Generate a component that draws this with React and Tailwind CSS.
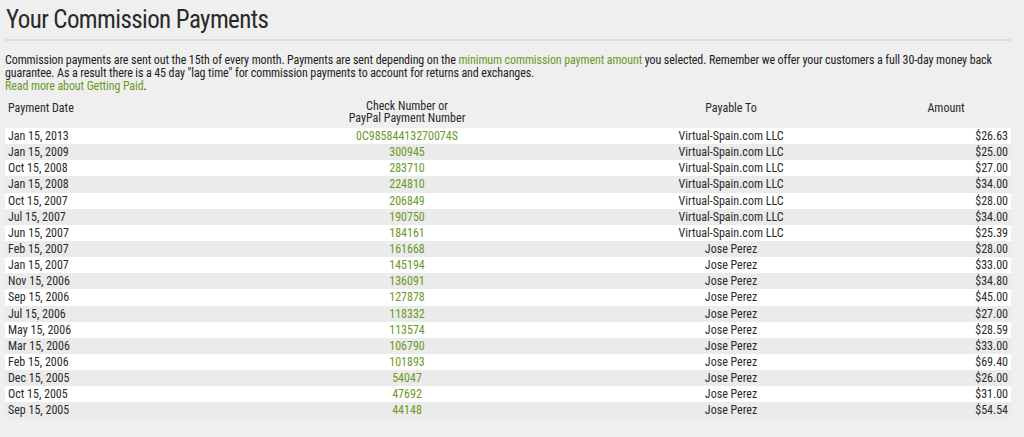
import React from "react";

// Historial de pagos de comisiones
const payments = [
	["Jan 15, 2013", "0C98584413270074S", "Virtual-Spain.com LLC", "$26.63"],
	["Jan 15, 2009", "300945", "Virtual-Spain.com LLC", "$25.00"],
	["Oct 15, 2008", "283710", "Virtual-Spain.com LLC", "$27.00"],
	["Jan 15, 2008", "224810", "Virtual-Spain.com LLC", "$34.00"],
	["Oct 15, 2007", "206849", "Virtual-Spain.com LLC", "$28.00"],
	["Jul 15, 2007", "190750", "Virtual-Spain.com LLC", "$34.00"],
	["Jun 15, 2007", "184161", "Virtual-Spain.com LLC", "$25.39"],
	["Feb 15, 2007", "161668", "Jose Perez", "$28.00"],
	["Jan 15, 2007", "145194", "Jose Perez", "$33.00"],
	["Nov 15, 2006", "136091", "Jose Perez", "$34.80"],
	["Sep 15, 2006", "127878", "Jose Perez", "$45.00"],
	["Jul 15, 2006", "118332", "Jose Perez", "$27.00"],
	["May 15, 2006", "113574", "Jose Perez", "$28.59"],
	["Mar 15, 2006", "106790", "Jose Perez", "$33.00"],
	["Feb 15, 2006", "101893", "Jose Perez", "$69.40"],
	["Dec 15, 2005", "54047", "Jose Perez", "$26.00"],
	["Oct 15, 2005", "47692", "Jose Perez", "$31.00"],
	["Sep 15, 2005", "44148", "Jose Perez", "$54.54"],
];

function App() {
	return (
		<div
			className="min-h-screen bg-[#efefef] text-[#333] px-[5px] pt-[4px]"
			style={{ fontFamily: '"Roboto Condensed", "DejaVu Sans Condensed", Roboto, sans-serif' }}
		>
			<div className="w-[1006px]">
				<h1 className="text-[25px] leading-[32px] tracking-[-0.6px] text-[#2a2a2a] pl-[1px]">
					Your Commission Payments
				</h1>
				<hr className="mt-[3px] border-0 border-t-[2px] border-[#dcdcdc]" />

				<p className="mt-[13px] text-[12px] leading-[13px] tracking-[-0.1px] text-[#222]">
					Commission payments are sent out the 15th of every month. Payments are sent depending on the{" "}
					<a className="text-[#6a9a1f]">minimum commission payment amount</a> you selected. Remember we offer
					your customers a full 30-day money back guarantee. As a result there is a 45 day "lag time" for
					commission payments to account for returns and exchanges.
					<br />
					<a className="text-[#6a9a1f]">Read more about Getting Paid</a>.
				</p>

				<table className="mt-[6px] w-full text-[12px] leading-[16px] border-collapse text-[#2a2a2a]">
					<thead>
						<tr className="align-top">
							<th className="font-normal text-left px-[3px] pt-[1px] pb-[4px] w-[228px]">Payment Date</th>
							<th className="font-normal text-center px-[3px] pt-[1px] pb-[4px] leading-[12px]">
								Check Number or
								<br />
								PayPal Payment Number
							</th>
							<th className="font-normal text-center px-[3px] pt-[1px] pb-[4px] w-[300px]">Payable To</th>
							<th className="font-normal text-center px-[3px] pt-[1px] pb-[4px] w-[130px]">Amount</th>
						</tr>
					</thead>
					<tbody>
						{payments.map((p, i) => (
							<tr key={p[0]} className={i % 2 === 0 ? "bg-white" : "bg-[#ebebeb]"}>
								<td className="px-[3px] h-[16.15px]">{p[0]}</td>
								<td className="px-[3px] text-center text-[#6a9a1f]">{p[1]}</td>
								<td className="px-[3px] text-center">{p[2]}</td>
								<td className="px-[3px] text-right">{p[3]}</td>
							</tr>
						))}
					</tbody>
				</table>
			</div>
		</div>
	);
}

export default App;
